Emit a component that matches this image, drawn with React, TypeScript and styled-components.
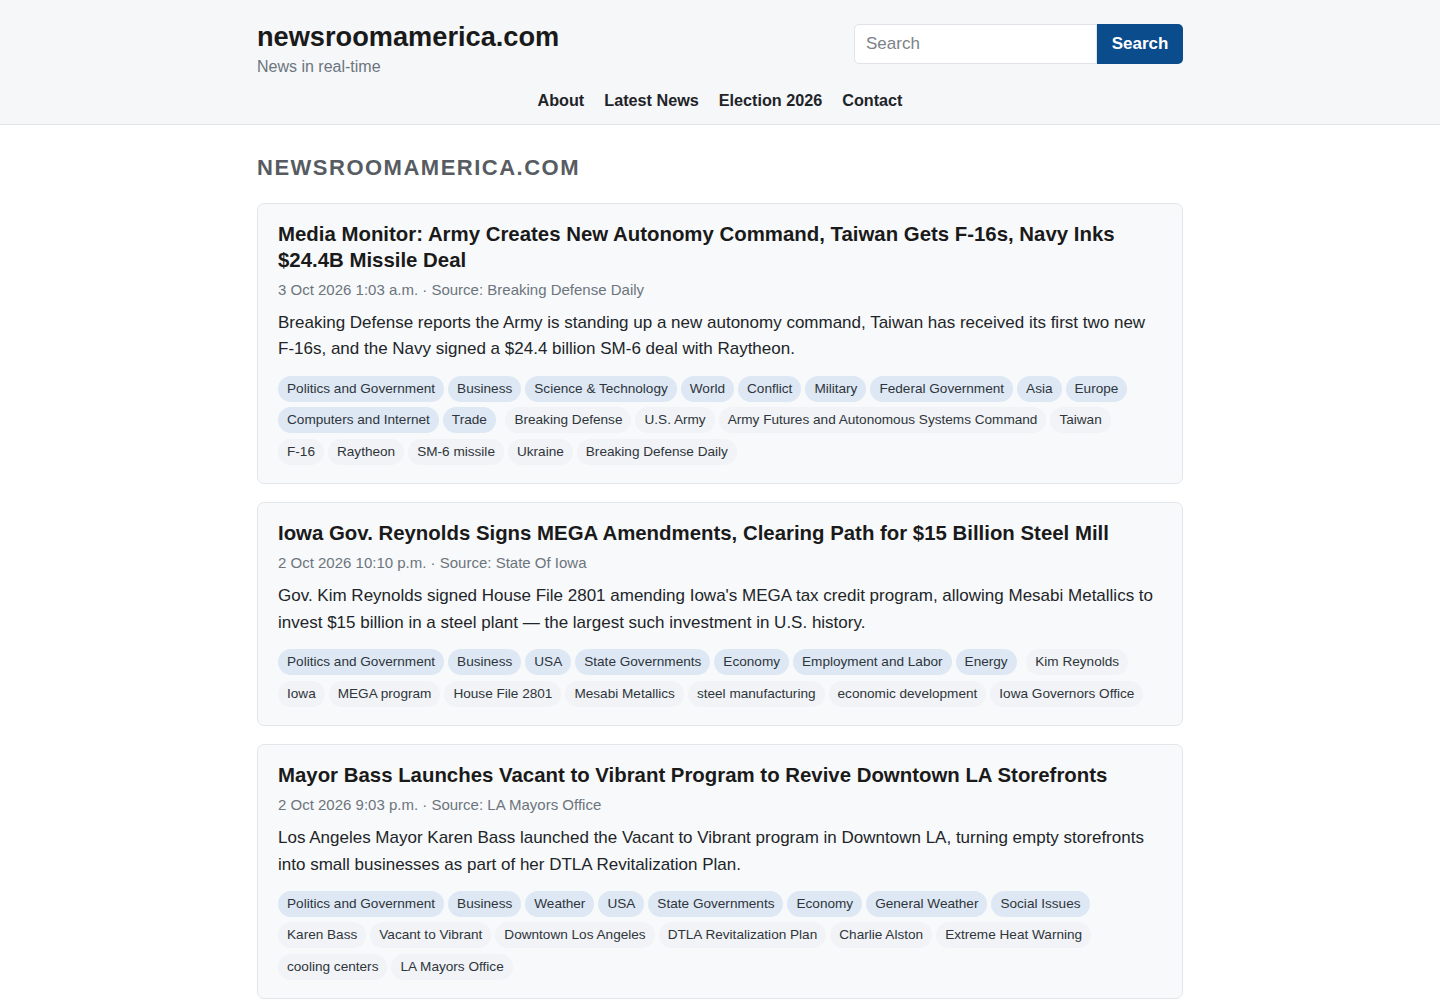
import React from "react";
import styled, { createGlobalStyle } from "styled-components";

type Story = {
  title: string;
  date: string;
  source: string;
  summary: string;
  categories: string[];
  keywords: string[];
};

const stories: Story[] = [
  {
    title:
      "Media Monitor: Army Creates New Autonomy Command, Taiwan Gets F-16s, Navy Inks $24.4B Missile Deal",
    date: "3 Oct 2026 1:03 a.m.",
    source: "Breaking Defense Daily",
    summary:
      "Breaking Defense reports the Army is standing up a new autonomy command, Taiwan has received its first two new F-16s, and the Navy signed a $24.4 billion SM-6 deal with Raytheon.",
    categories: [
      "Politics and Government",
      "Business",
      "Science & Technology",
      "World",
      "Conflict",
      "Military",
      "Federal Government",
      "Asia",
      "Europe",
      "Computers and Internet",
      "Trade",
    ],
    keywords: [
      "Breaking Defense",
      "U.S. Army",
      "Army Futures and Autonomous Systems Command",
      "Taiwan",
      "F-16",
      "Raytheon",
      "SM-6 missile",
      "Ukraine",
      "Breaking Defense Daily",
    ],
  },
  {
    title:
      "Iowa Gov. Reynolds Signs MEGA Amendments, Clearing Path for $15 Billion Steel Mill",
    date: "2 Oct 2026 10:10 p.m.",
    source: "State Of Iowa",
    summary:
      "Gov. Kim Reynolds signed House File 2801 amending Iowa's MEGA tax credit program, allowing Mesabi Metallics to invest $15 billion in a steel plant \u2014 the largest such investment in U.S. history.",
    categories: [
      "Politics and Government",
      "Business",
      "USA",
      "State Governments",
      "Economy",
      "Employment and Labor",
      "Energy",
    ],
    keywords: [
      "Kim Reynolds",
      "Iowa",
      "MEGA program",
      "House File 2801",
      "Mesabi Metallics",
      "steel manufacturing",
      "economic development",
      "Iowa Governors Office",
    ],
  },
  {
    title:
      "Mayor Bass Launches Vacant to Vibrant Program to Revive Downtown LA Storefronts",
    date: "2 Oct 2026 9:03 p.m.",
    source: "LA Mayors Office",
    summary:
      "Los Angeles Mayor Karen Bass launched the Vacant to Vibrant program in Downtown LA, turning empty storefronts into small businesses as part of her DTLA Revitalization Plan.",
    categories: [
      "Politics and Government",
      "Business",
      "Weather",
      "USA",
      "State Governments",
      "Economy",
      "General Weather",
      "Social Issues",
    ],
    keywords: [
      "Karen Bass",
      "Vacant to Vibrant",
      "Downtown Los Angeles",
      "DTLA Revitalization Plan",
      "Charlie Alston",
      "Extreme Heat Warning",
      "cooling centers",
      "LA Mayors Office",
    ],
  },
];

const navLinks = ["About", "Latest News", "Election 2026", "Contact"];

const GlobalStyle = createGlobalStyle`
  * { box-sizing: border-box; }
  body {
    margin: 0;
    background: #ffffff;
    color: #212529;
    font-family: "Liberation Sans", Arial, sans-serif;
  }
`;

const Header = styled.header`
  background: #f5f7f9;
  border-bottom: 1px solid #e0e3e7;
  padding: 20px 0 14px;
`;

const Container = styled.div`
  width: 926px;
  margin: 0 auto;
`;

const TopRow = styled.div`
  display: flex;
  justify-content: space-between;
  align-items: flex-start;
`;

const Brand = styled.div``;

const SiteName = styled.a`
  display: block;
  font-size: 27.2px;
  line-height: 34px;
  font-weight: 700;
  color: #1a1a1a;
  text-decoration: none;
`;

const Tagline = styled.div`
  font-size: 16px;
  line-height: 19px;
  color: #6c757d;
  margin-top: 3px;
`;

const SearchForm = styled.form`
  display: flex;
  margin-top: 4px;
`;

const SearchInput = styled.input`
  width: 243px;
  height: 40px;
  border: 1px solid #e0e3e7;
  border-radius: 5px 0 0 5px;
  background: #ffffff;
  padding: 0 11px;
  font-family: inherit;
  font-size: 17px;
  color: #212529;
  outline: none;

  &::placeholder {
    color: #7b8288;
  }
`;

const SearchButton = styled.button`
  width: 86px;
  height: 40px;
  border: none;
  border-radius: 0 5px 5px 0;
  background: #0b4d8c;
  color: #ffffff;
  font-family: inherit;
  font-size: 17px;
  font-weight: 700;
  cursor: pointer;
`;

const Nav = styled.nav`
  display: flex;
  justify-content: center;
  gap: 20px;
  margin-top: 15px;
`;

const NavLink = styled.a`
  font-size: 16.2px;
  line-height: 19px;
  font-weight: 700;
  color: #1f2428;
  text-decoration: none;
`;

const Main = styled.main`
  padding: 30px 0 40px;
`;

const SectionTitle = styled.h2`
  margin: 0 0 22px;
  font-size: 22px;
  line-height: 26px;
  font-weight: 700;
  letter-spacing: 1.5px;
  text-transform: uppercase;
  color: #565c62;
`;

const Card = styled.article`
  background: #f8f9fa;
  border: 1px solid #e3e6ea;
  border-radius: 7px;
  padding: 17px 20px 13px;
  margin-bottom: 18px;
`;

const Title = styled.h3`
  margin: 0;
  font-size: 20.4px;
  line-height: 26px;
  font-weight: 700;
  color: #1a1a1a;
`;

const Meta = styled.div`
  margin-top: 6px;
  font-size: 15px;
  line-height: 21px;
  color: #6c757d;
`;

const Summary = styled.p`
  margin: 10px 0 13px;
  font-size: 17px;
  line-height: 26.4px;
  color: #212529;
`;

/* tags flow inline, a plain space separates categories from keywords */
const Tags = styled.div`
  font-size: 20px;
  line-height: 0;
`;

const Tag = styled.span<{ $category?: boolean }>`
  display: inline-block;
  vertical-align: top;
  height: 26px;
  line-height: 26px;
  padding: 0 9px;
  margin: 0 4px 5.5px 0;
  border-radius: 13px;
  font-size: 13.6px;
  white-space: nowrap;
  color: #2f353b;
  background: ${(p) => (p.$category ? "#dde8f4" : "#f1f3f6")};
`;

export default function App() {
  return (
    <>
      <GlobalStyle />
      <Header>
        <Container>
          <TopRow>
            <Brand>
              <SiteName href="#">newsroomamerica.com</SiteName>
              <Tagline>News in real-time</Tagline>
            </Brand>
            <SearchForm onSubmit={(e) => e.preventDefault()}>
              <SearchInput placeholder="Search" />
              <SearchButton type="submit">Search</SearchButton>
            </SearchForm>
          </TopRow>
          <Nav>
            {navLinks.map((l) => (
              <NavLink key={l} href="#">
                {l}
              </NavLink>
            ))}
          </Nav>
        </Container>
      </Header>
      <Main>
        <Container>
          <SectionTitle>newsroomamerica.com</SectionTitle>
          {stories.map((s) => (
            <Card key={s.title}>
              <Title>{s.title}</Title>
              <Meta>
                {s.date} · Source: {s.source}
              </Meta>
              <Summary>{s.summary}</Summary>
              <Tags>
                {s.categories.map((c) => (
                  <Tag key={"c" + c} $category>
                    {c}
                  </Tag>
                ))}{" "}
                {s.keywords.map((k) => (
                  <Tag key={"k" + k}>{k}</Tag>
                ))}
              </Tags>
            </Card>
          ))}
        </Container>
      </Main>
    </>
  );
}
